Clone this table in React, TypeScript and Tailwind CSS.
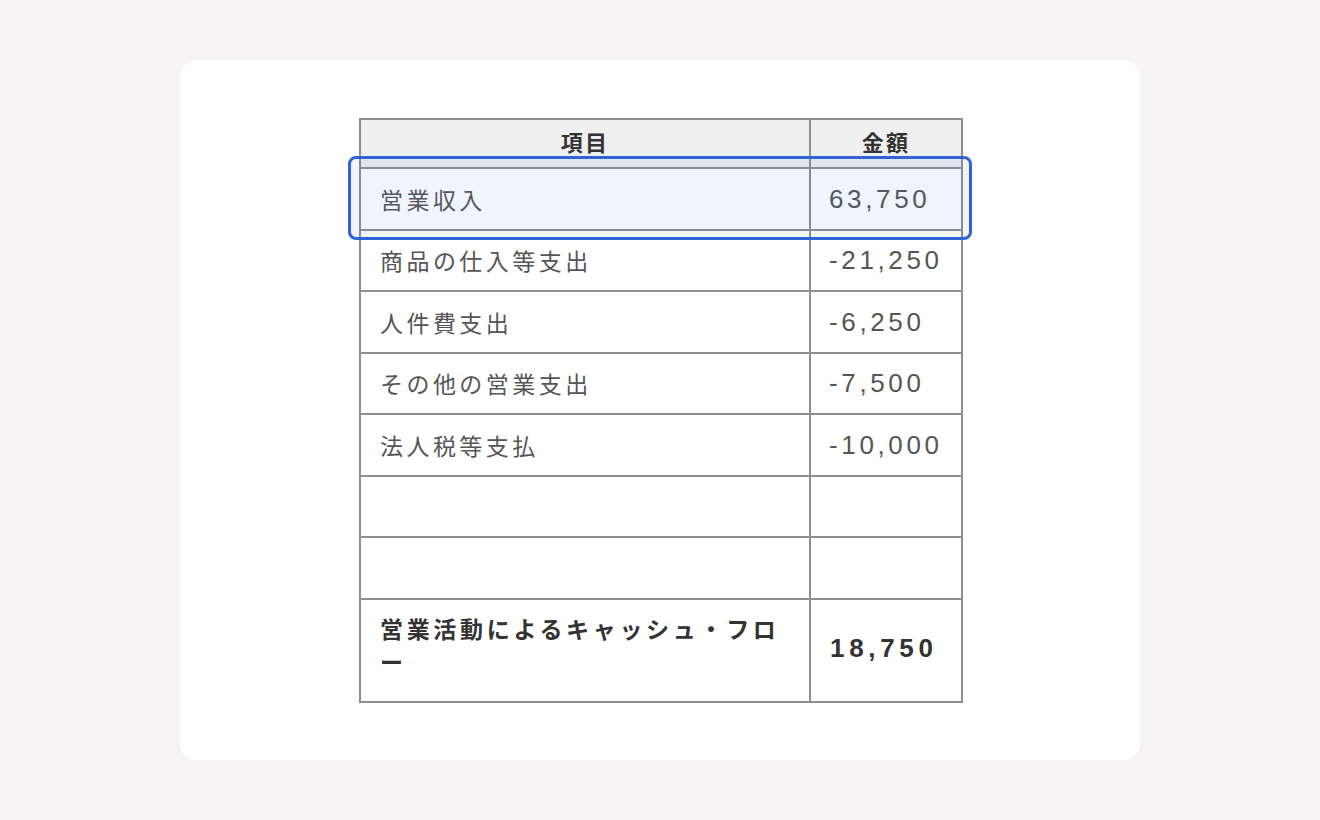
import React from "react";

interface Row {
	label: string;
	amount: string;
}

const rows: Row[] = [
	{ label: "営業収入", amount: "63,750" },
	{ label: "商品の仕入等支出", amount: "-21,250" },
	{ label: "人件費支出", amount: "-6,250" },
	{ label: "その他の営業支出", amount: "-7,500" },
	{ label: "法人税等支払", amount: "-10,000" },
	{ label: "", amount: "" },
	{ label: "", amount: "" },
];

const numFont = { fontFamily: '"Liberation Sans", "Noto Sans CJK JP", sans-serif' };

export default function App() {
	return (
		<div
			className="min-h-[820px] w-full bg-[#f5f3f4] flex items-start justify-center pt-[60px]"
			style={{ fontFamily: '"Noto Sans CJK JP", "Noto Sans", sans-serif' }}
		>
			<div className="w-[960px] h-[700px] bg-white rounded-2xl flex justify-center pt-[58px]">
				<div className="relative w-[602px] h-fit">
					<table className="w-[602px] border-collapse table-fixed border-2 border-[#8f8f8f]">
						<colgroup>
							<col className="w-[450px]" />
							<col className="w-[152px]" />
						</colgroup>
						<thead>
							<tr className="h-[49px] bg-[#efefef]">
								<th className="border-2 border-[#8f8f8f] pb-[6px] text-[22px] leading-[28px] font-bold text-[#333] tracking-[0.1em] text-center">
									項目
								</th>
								<th className="border-2 border-[#8f8f8f] pb-[6px] text-[22px] leading-[28px] font-bold text-[#333] tracking-[0.1em] text-center">
									金額
								</th>
							</tr>
						</thead>
						<tbody>
							{rows.map((row, i) => (
								<tr key={i} className="h-[61.5px] bg-white">
									<td className="border-2 border-[#8f8f8f] px-[19px] text-[23px] leading-[30px] text-[#555] tracking-[0.15em]">
										{row.label}
									</td>
									<td
										className="border-2 border-[#8f8f8f] pl-[18px] pr-[2px] text-[26px] leading-[30px] text-[#555] tracking-[0.14em] whitespace-nowrap"
										style={numFont}
									>
										{row.amount}
									</td>
								</tr>
							))}
							<tr className="h-[103px]">
								<td className="border-2 border-[#8f8f8f] pl-[19px] pr-[20px] pt-[12px] pb-[22px] text-[23px] font-bold text-[#333] tracking-[0.16em] leading-[33px]">
									営業活動によるキャッシュ・フロー
								</td>
								<td
									className="border-2 border-[#8f8f8f] pl-[19px] pr-[2px] pb-[4px] text-[26px] font-bold text-[#333] tracking-[0.18em] whitespace-nowrap"
									style={numFont}
								>
									18,750
								</td>
							</tr>
						</tbody>
					</table>

					{/* highlight on first row */}
					<div className="absolute left-[-11px] top-[38px] w-[624px] h-[84px] rounded-[8px] border-[3px] border-[#2f64d6] bg-[#3b6ee6]/[0.08] pointer-events-none" />
				</div>
			</div>
		</div>
	);
}
